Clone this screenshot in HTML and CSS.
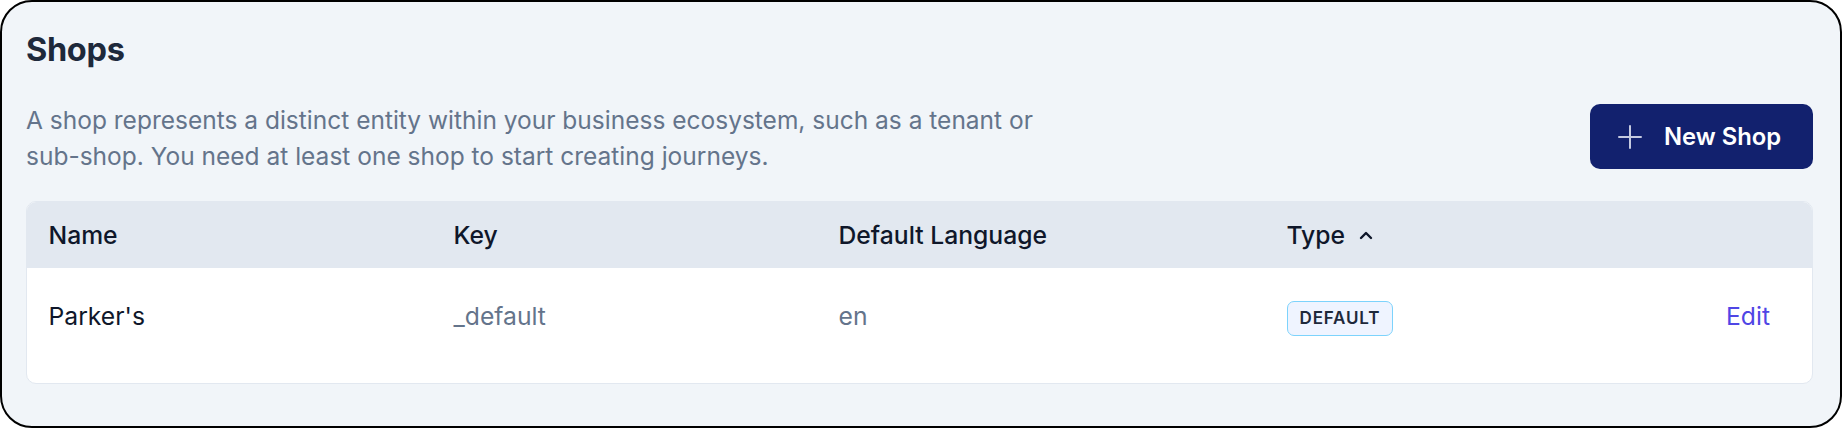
FILE: index.html
```html
<!DOCTYPE html>
<html lang="en">
<head>
<meta charset="utf-8">
<title>Shops</title>
<link rel="stylesheet" href="styles.css">
</head>
<body>
<section class="panel">
  <h1 class="title">Shops</h1>
  <div class="intro">
    <p class="desc">A shop represents a distinct entity within your business ecosystem, such as a tenant or <span class="nowrap">sub-shop.</span> You need at least one shop to start creating journeys.</p>
    <button class="btn-new" type="button">
      <svg class="plus" width="24" height="24" viewBox="0 0 24 24" fill="none" stroke="currentColor" stroke-width="2" stroke-linecap="round"><path d="M12 1v22M1 12h22"/></svg>
      <span>New Shop</span>
    </button>
  </div>
  <div class="table">
    <div class="row head">
      <div class="cell">Name</div>
      <div class="cell">Key</div>
      <div class="cell">Default Language</div>
      <div class="cell type-head">Type
        <svg class="caret" width="14" height="10" viewBox="0 0 14 10" fill="none" stroke="currentColor" stroke-width="2.4" stroke-linecap="round" stroke-linejoin="round"><path d="M2 8l5-5 5 5"/></svg>
      </div>
      <div class="cell"></div>
    </div>
    <div class="row body">
      <div class="cell name">Parker's</div>
      <div class="cell muted">_default</div>
      <div class="cell muted">en</div>
      <div class="cell"><span class="badge">DEFAULT</span></div>
      <div class="cell action"><a class="edit" href="#">Edit</a></div>
    </div>
  </div>
</section>
</body>
</html>
```
FILE: styles.css
```css
* { box-sizing: border-box; }
html, body { margin: 0; padding: 0; background: #ffffff; }
body {
  font-family: Inter, "Noto Sans", "Liberation Sans", sans-serif;
  width: 1842px;
  height: 428px;
}
.panel {
  width: 1842px;
  height: 428px;
  background: #f1f5f9;
  border: 2px solid #000;
  border-radius: 32px;
  padding: 27px 27px 0 24px;
  display: flex;
  flex-direction: column;
}
.title {
  margin: 0;
  font-size: 32.5px;
  line-height: 41.6px;
  font-weight: 700;
  color: #1e293b;
  letter-spacing: -0.01em;
}
.intro {
  margin-top: 31px;
  display: flex;
  align-items: center;
  justify-content: space-between;
}
.desc {
  margin: 0;
  max-width: 1060px;
  font-size: 24.5px;
  line-height: 36.4px;
  color: #64748b;
}
.nowrap { white-space: nowrap; }
.btn-new {
  display: flex;
  align-items: center;
  gap: 22px;
  height: 65px;
  width: 223px;
  margin-bottom: 3px;
  padding: 0 28px;
  border: 0;
  border-radius: 10px;
  background: #12216e;
  color: #ffffff;
  font-family: inherit;
  font-size: 23.8px;
  font-weight: 600;
  cursor: pointer;
}
.plus { color: #c5cae0; flex: none; }
.table {
  margin-top: 27px;
  background: #ffffff;
  border: 1px solid #e2e8f0;
  border-radius: 10px;
  overflow: hidden;
  padding-bottom: 19px;
}
.row {
  display: grid;
  grid-template-columns: 405px 385px 448px 1fr 160px;
  align-items: center;
}
.head {
  height: 66px;
  background: #e2e8f0;
  color: #0f172a;
  font-weight: 500;
}
.body { height: 96px; }
.cell {
  padding: 0 21.5px;
  font-size: 24.7px;
  line-height: 36px;
}
.name { color: #0f172a; }
.muted { color: #64748b; }
.type-head { display: flex; align-items: center; gap: 14px; }
.caret { color: #0f172a; }
.badge {
  display: inline-block;
  padding: 0 12px;
  height: 35px;
  line-height: 33px;
  border: 1px solid #7dd3fc;
  border-radius: 7px;
  background: #eff4ff;
  color: #1e293b;
  font-size: 17px;
  font-weight: 600;
  letter-spacing: 0.05em;
}
.action { text-align: right; padding-right: 42px; }
.edit { color: #4f46e5; text-decoration: none; }
```
